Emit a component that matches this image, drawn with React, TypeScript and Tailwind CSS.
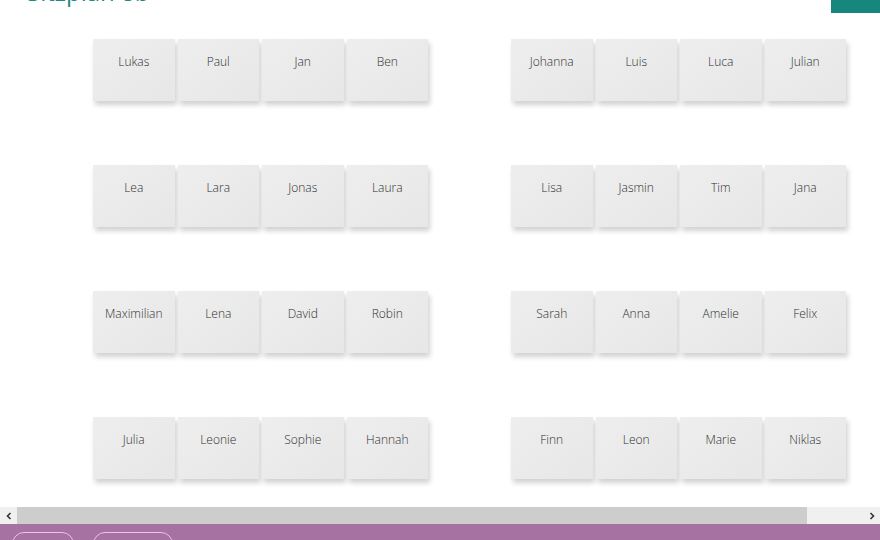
import React from "react";

const groups: string[][] = [
  ["Lukas", "Paul", "Jan", "Ben"],
  ["Johanna", "Luis", "Luca", "Julian"],
  ["Lea", "Lara", "Jonas", "Laura"],
  ["Lisa", "Jasmin", "Tim", "Jana"],
  ["Maximilian", "Lena", "David", "Robin"],
  ["Sarah", "Anna", "Amelie", "Felix"],
  ["Julia", "Leonie", "Sophie", "Hannah"],
  ["Finn", "Leon", "Marie", "Niklas"],
];

function Card({ name }: { name: string }) {
  return (
    <div className="h-[62px] bg-gradient-to-br from-[#eeeeee] to-[#e7e7e7] shadow-[2px_4px_5px_rgba(0,0,0,0.18)] flex justify-center pt-[15px] text-[12px] leading-[16px] font-light text-[#2f2f2f]">
      {name}
    </div>
  );
}

export default function App() {
  return (
    <div
      className="w-[880px] h-[540px] overflow-hidden bg-white flex flex-col"
      style={{ fontFamily: '"Open Sans", "Noto Sans", sans-serif' }}
    >
      <div className="h-[13px] flex justify-between items-start">
        <div className="ml-[27px] -mt-[23px] text-[24px] leading-[30px] text-[#1d8a7f]">
          Sitzplan 8b
        </div>
        <div className="w-[49px] h-[13px] bg-[#17877e]" />
      </div>
      <div className="flex-1 pt-[26px] pl-[93px]">
        <div className="grid grid-cols-[335px_335px] gap-x-[83px] gap-y-[64px]">
          {groups.map((g, i) => (
            <div key={i} className="grid grid-cols-4 gap-x-[3px]">
              {g.map((n) => (
                <Card key={n} name={n} />
              ))}
            </div>
          ))}
        </div>
      </div>
      <div className="h-[17px] flex bg-[#f0f0f0]">
        <div className="w-[17px] flex items-center justify-center text-[#333]">
          <svg width="8" height="8" viewBox="0 0 8 8">
            <path d="M5.5 1 L2.5 4 L5.5 7" fill="none" stroke="#333" strokeWidth="1.6" />
          </svg>
        </div>
        <div className="w-[790px] bg-[#cdcdcd]" />
        <div className="flex-1" />
        <div className="w-[17px] flex items-center justify-center">
          <svg width="8" height="8" viewBox="0 0 8 8">
            <path d="M2.5 1 L5.5 4 L2.5 7" fill="none" stroke="#333" strokeWidth="1.6" />
          </svg>
        </div>
      </div>
      <div className="h-[16px] bg-[#a572a2] flex items-start gap-[19px] pl-[12px] pt-[8px]">
        <div className="w-[62px] h-[24px] rounded-full border border-[#e8c6e8]" />
        <div className="w-[80px] h-[24px] rounded-full border border-[#e8c6e8]" />
      </div>
    </div>
  );
}
